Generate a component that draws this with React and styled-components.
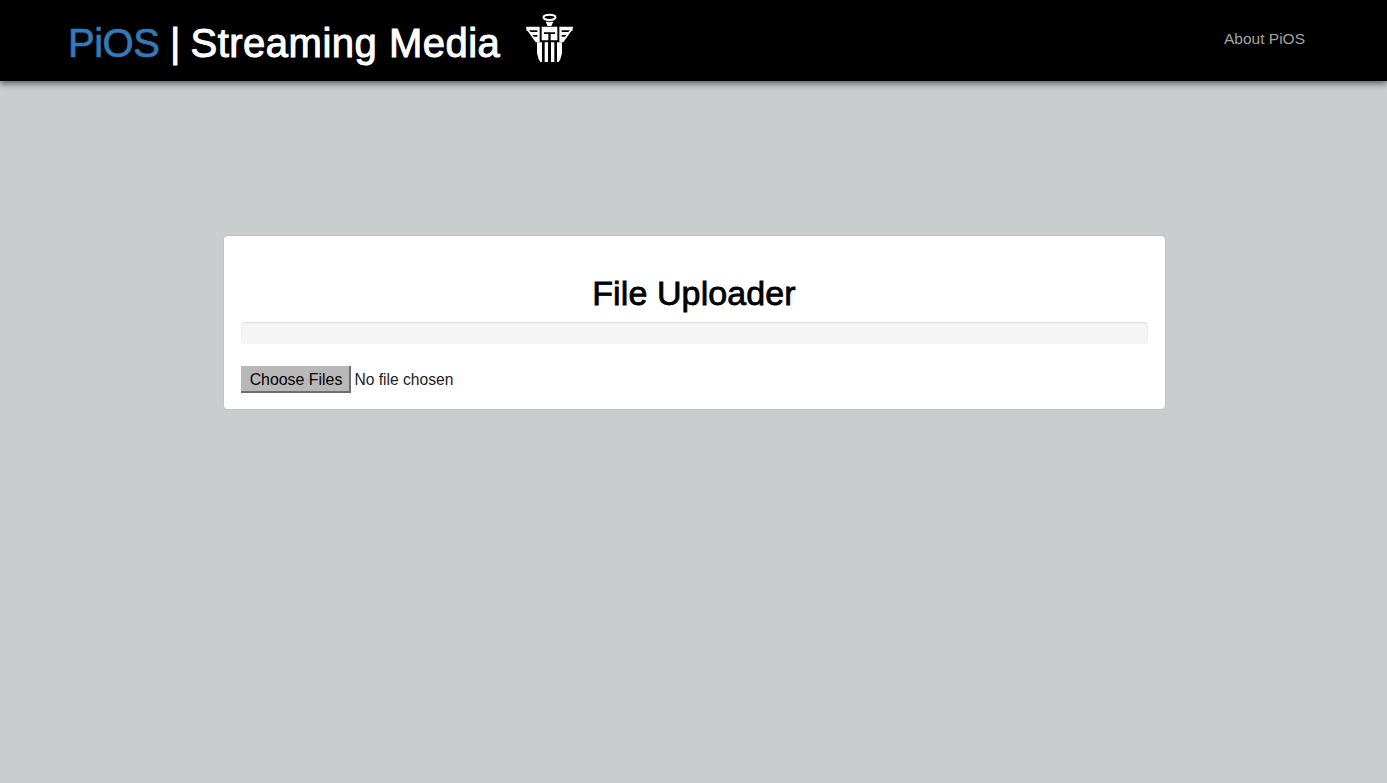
import styled, { createGlobalStyle } from 'styled-components';

const GlobalStyle = createGlobalStyle`
  html,
  body {
    margin: 0;
    height: 100%;
    background: #c9cdce;
    font-family: 'Liberation Sans', Arial, sans-serif;
  }
`;

const Header = styled.header`
  height: 81px;
  padding: 0 82px 0 68px;
  background: #000;
  box-shadow: 0 3px 6px rgba(0, 0, 0, 0.5);
  display: flex;
  align-items: flex-start;
  justify-content: space-between;
`;
const Brand = styled.div`
  display: flex;
  align-items: flex-start;
`;
const Title = styled.h1`
  margin: 20px 0 0;
  font-size: 40px;
  line-height: 46px;
  font-weight: 400;
  color: #fff;
  letter-spacing: -0.5px;
  -webkit-text-stroke: 1px #fff;
`;
const Accent = styled.span`
  color: #337ab7;
  -webkit-text-stroke: 0.7px #337ab7;
`;
const Product = styled.span`
  letter-spacing: 0.5px;
`;
const Logo = styled.svg`
  width: 70px;
  height: 65px;
  margin: 5px 0 0 15px;
`;
const NavLink = styled.a`
  margin-top: 29px;
  font-size: 15.5px;
  line-height: 20px;
  color: #a3a3a3;
  text-decoration: none;
`;
const Main = styled.main`
  display: flex;
  justify-content: center;
  padding: 155px 0 0 1px;
`;
const Card = styled.section`
  width: 941px;
  box-sizing: border-box;
  padding: 35px 17px 16px;
  background: #fff;
  border-radius: 4px;
  box-shadow: 0 0 2px rgba(0, 0, 0, 0.15);
`;
const Heading = styled.h2`
  margin: 0 0 7px;
  font-size: 34px;
  line-height: 44px;
  font-weight: 400;
  letter-spacing: 0.1px;
  -webkit-text-stroke: 0.8px #000;
  text-align: center;
  color: #000;
`;
const Progress = styled.div`
  height: 22px;
  margin-bottom: 22px;
  box-sizing: border-box;
  background: #f5f5f5;
  border-radius: 4px;
  box-shadow: inset 0 1px 2px rgba(0, 0, 0, 0.1);
`;
const FileRow = styled.div`
  display: flex;
  align-items: center;
  font-size: 15.6px;
  color: #222;
`;
const ChooseButton = styled.button`
  height: 27px;
  width: 110px;
  padding: 2px 0 0 3px;
  margin-right: 4px;
  background: #b9b8b8;
  border: 0;
  border-right: 2px solid #6e6e6e;
  border-bottom: 2px solid #6e6e6e;
  font: inherit;
  font-size: 15.9px;
  color: #000;
`;

const wing = 'M33 65h41v47h-12l-24-34h-3zM42 76l5 5h20v-5zM52 90l5 5h10v-5z';

const App = () => (
  <>
    <GlobalStyle />
    <Header>
      <Brand>
        <Title>
          <Accent>PiOS</Accent> | <Product>Streaming Media</Product>
        </Title>
        <Logo viewBox="0 0 210 195" fill="#fff">
          <ellipse cx="103.5" cy="37" rx="18" ry="8" fill="none" stroke="#fff" strokeWidth="6" />
          <path d="M92 50h23l-6 13h-11z" />
          <path d={wing} fillRule="evenodd" />
          <path d={wing} fillRule="evenodd" transform="translate(207) scale(-1 1)" />
          <path d="M80 65h47v41h-47zM87 82v5h13v19h7v-19h13v-5z" fillRule="evenodd" />
          <path d="M66 112h15v59h-5l-5-8-5-18zM141 112h-15v59h5l5-8 5-18zM89 112h10v59h-10zM108 112h10v59h-10z" />
        </Logo>
      </Brand>
      <NavLink href="#">About PiOS</NavLink>
    </Header>
    <Main>
      <Card>
        <Heading>File Uploader</Heading>
        <Progress />
        <FileRow>
          <ChooseButton type="button">Choose Files</ChooseButton>
          No file chosen
        </FileRow>
      </Card>
    </Main>
  </>
);

export default App;
